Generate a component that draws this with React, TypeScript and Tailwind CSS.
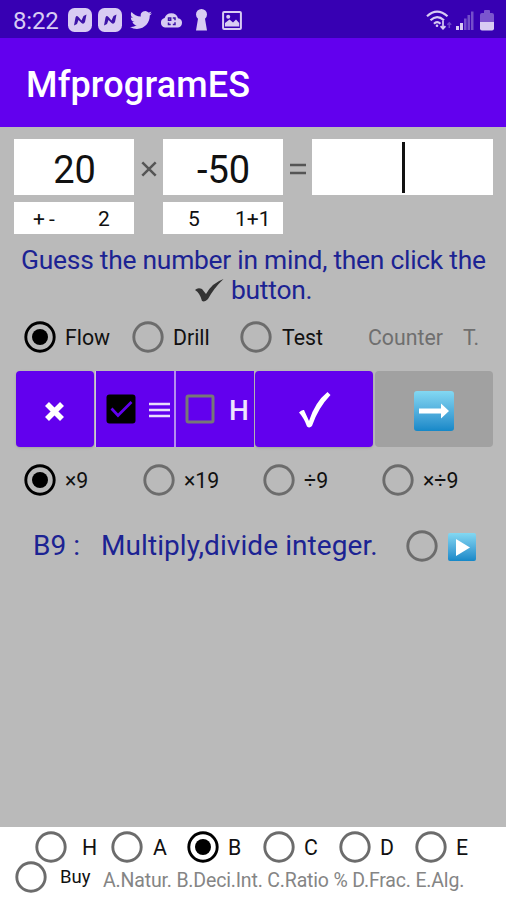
import type { ReactNode } from "react";

function Radio({ checked = false }: { checked?: boolean }) {
  return (
    <svg className={checked ? "size-8 shrink-0 text-black" : "size-8 shrink-0 text-[#6c6c6c]"} viewBox="0 0 32 32">
      <circle cx="16" cy="16" r="14.2" fill="none" stroke="currentColor" strokeWidth="2.9" />
      {checked && <circle cx="16" cy="16" r="8" fill="currentColor" />}
    </svg>
  );
}

function Option({ label, checked, className, gap }: { label: string; checked?: boolean; className: string; gap: string }) {
  return (
    <label className={`flex h-8 shrink-0 items-center whitespace-nowrap ${className}`}>
      <Radio checked={checked} />
      <span className={`pt-[2px] ${gap}`}>{label}</span>
    </label>
  );
}

function Box({ children, className }: { children?: ReactNode; className: string }) {
  return <div className={`flex shrink-0 items-center bg-white ${className}`}>{children}</div>;
}

function MessengerIcon() {
  return (
    <svg className="h-6 w-6 shrink-0" viewBox="0 0 24 24">
      <rect width="24" height="24" rx="6.5" fill="#d8ccf3" />
      <path d="M6 17.5 L7.5 9.5 Q8.5 7 10.5 9 L13.5 12.5 L15.5 8 L18.5 6.5 L17 14 Q15.5 17 13.5 15 L10.5 12 L9 16Z" fill="#3d14a8" />
    </svg>
  );
}

function StatusBar() {
  return (
    <div className="flex h-[38px] shrink-0 items-center bg-[#3700b3] pt-[2px] pl-[13px] text-[#d8ccf3]">
      <span className="w-[55px] pt-px text-[24px] tracking-[-0.2px]">8:22</span>
      <MessengerIcon />
      <span className="w-[6px]" />
      <MessengerIcon />
      <svg className="ml-[8px] h-[22px] w-[22px]" viewBox="0 0 24 24" fill="currentColor">
        <path d="M23.95 4.57a10 10 0 0 1-2.82.77 4.96 4.96 0 0 0 2.16-2.72c-.95.55-2 .95-3.13 1.18a4.92 4.92 0 0 0-8.38 4.48C7.69 8.09 4.07 6.13 1.64 3.16a4.82 4.82 0 0 0-.67 2.48c0 1.71.87 3.21 2.19 4.1a4.9 4.9 0 0 1-2.23-.62v.06a4.92 4.92 0 0 0 3.95 4.83 5 5 0 0 1-2.21.08 4.94 4.94 0 0 0 4.6 3.42A9.87 9.87 0 0 1 0 19.54a14 14 0 0 0 7.55 2.21c9.05 0 14-7.5 14-13.98 0-.21 0-.42-.02-.63a9.94 9.94 0 0 0 2.42-2.57z" />
      </svg>
      <svg className="ml-[8px] h-4 w-[23px]" viewBox="0 0 23 16">
        <path d="M5 15.5a4.8 4.8 0 0 1-.4-9.4A7 7 0 0 1 18 6.2a4.7 4.7 0 0 1 0 9.3Z" fill="currentColor" />
        <path d="M8.5 6h2.2v2.2H8.5zM12.8 6H15v2.2M8.5 10.5V12.5h2.2M15 10.3v2.2h-2.2" fill="none" stroke="#3d14a8" strokeWidth="1.5" />
      </svg>
      <svg className="ml-[12px] h-[22px] w-[13px]" viewBox="0 0 13 22" fill="currentColor">
        <path d="M6.5 0A5.5 5.5 0 0 0 1 5.5Q1 8 3 9.8L1 21.5H12L10 9.8Q12 8 12 5.5A5.5 5.5 0 0 0 6.5 0Z" />
      </svg>
      <svg className="ml-[14px] h-[19px] w-[20px]" viewBox="0 0 20 19">
        <rect x="1.1" y="1.1" width="17.8" height="16.8" rx="1" fill="none" stroke="currentColor" strokeWidth="2" />
        <path d="M3 15.5V12l4.5-3.5 3.5 3 3-3 3.2 3.5v3.5z" fill="currentColor" />
        <circle cx="6.2" cy="5.7" r="2" fill="currentColor" />
      </svg>
      <svg className="ml-[184px] h-[20px] w-[26px]" viewBox="0 0 26 20" fill="none" stroke="currentColor">
        <path d="M1 6.3Q11 -3 21.5 6.3M4.5 10.3Q11 4 18 10.3M8 13.7Q11 10.5 14.5 13.7" strokeWidth="2.2" />
        <circle cx="11" cy="15.7" r="1.3" fill="currentColor" stroke="none" />
        <path d="M17 10.5v8M14.6 16.2l2.4 2.6 2.4-2.6" strokeWidth="1.7" />
        <path d="M23.3 18v-5M21.4 14.8l1.9-2 1.9 2" strokeWidth="1.5" opacity=".35" />
      </svg>
      <svg className="ml-[4px] h-[19px] w-[18px]" viewBox="0 0 18 19" fill="currentColor">
        <path d="M0 15h3v4H0zM4 12h3v7H4z" />
        <path d="M8 7.5h2.6V19H8zM11.5 4h2.6v15h-2.6zM15 .5h2.5V19H15z" opacity=".38" />
      </svg>
      <svg className="ml-[6px] h-[21px] w-[14px]" viewBox="0 0 14 21" fill="currentColor">
        <path d="M0 12V5q0-2 2-2h2V1q0-1 1-1h4q1 0 1 1v2h2q2 0 2 2v7z" opacity=".42" />
        <path d="M0 12h14v6.5q0 2-2 2H2q-2 0-2-2z" />
      </svg>
    </div>
  );
}

function Problem() {
  return (
    <div className="flex pl-[14px]">
      <div className="w-[120px]">
        <Box className="h-14 justify-center pt-[6px] pl-px text-[38px]">20</Box>
        <Box className="mt-[7px] h-8 pt-[4px] pl-[19px] text-[21px]">
          <span className="w-[65px] tracking-[-0.5px]">+ -</span>
          <span>2</span>
        </Box>
      </div>
      <div className="flex h-14 w-[29px] items-center justify-center pt-1 text-[#555]">
        <svg className="size-4" viewBox="0 0 16 16" stroke="currentColor" strokeWidth="2.5">
          <path d="M1.3 1.3 14.7 14.7M14.7 1.3 1.3 14.7" />
        </svg>
      </div>
      <div className="w-[120px]">
        <Box className="h-14 justify-center pt-[6px] pl-px text-[38px]">-50</Box>
        <Box className="mt-[7px] h-8 pt-[4px] pl-[25px] text-[21px]">
          <span className="w-[47px]">5</span>
          <span>1+1</span>
        </Box>
      </div>
      <div className="flex h-14 w-[29px] items-center justify-center pt-1 text-[#555]">
        <svg className="h-3 w-4" viewBox="0 0 16 12" stroke="currentColor" strokeWidth="2.5">
          <path d="M0 2H16M0 10H16" />
        </svg>
      </div>
      <Box className="h-14 w-[181px] justify-center pl-[2px]">
        <span className="h-[51px] w-[3px] bg-[#111]" />
      </Box>
    </div>
  );
}

function Toolbar() {
  return (
    <div className="mt-[17px] flex h-[76px] pl-4">
      <button className="mr-px flex w-[78px] items-center justify-center rounded-[4px] bg-[#6200ee] pt-1 pr-[2px] shadow-sm">
        <svg className="size-[19px]" viewBox="0 0 19 19" stroke="#fff" strokeWidth="5.6">
          <path d="M2 2 17 17M17 2 2 17" />
        </svg>
      </button>
      <div className="flex w-[79px] items-center border-l border-[#d0c4e4] bg-[#6200ee] pl-[10px]">
        <svg className="size-[30px]" viewBox="0 0 30 30">
          <rect x=".5" y=".5" width="29" height="29" rx="3" fill="#000" />
          <path d="M5.5 14.5 12 21.5 25.5 8" fill="none" stroke="#6200ee" strokeWidth="2.7" />
        </svg>
        <svg className="mt-[2px] ml-[13px] h-4 w-[21px]" viewBox="0 0 21 16" stroke="#e9dcfc" strokeWidth="2.4">
          <path d="M0 2H21M0 8H21M0 14H21" />
        </svg>
      </div>
      <div className="flex w-20 items-center border-l-2 border-[#b48cf0] bg-[#6200ee] pl-[9px]">
        <svg className="size-[30px]" viewBox="0 0 30 30">
          <rect x="2" y="2" width="26" height="26" rx="1.5" fill="none" stroke="#777" strokeWidth="3" />
        </svg>
        <span className="ml-[14px] pt-[4px] text-[28px] font-medium text-[#eee4fd]">H</span>
      </div>
      <button className="mr-[2px] ml-px flex w-[118px] items-center justify-center rounded-[4px] bg-[#6200ee] pt-px pl-[2px] shadow-sm">
        <svg className="h-[36px] w-[32px]" viewBox="0 0 32 36">
          <path d="M0 20.5Q2.5 17.5 5 18L10 29Q16 10 28.5 0L31.5 3Q19 16 13 34Q10.5 36.5 8 34.5Q5 26 0 20.5Z" fill="#fff" />
        </svg>
      </button>
      <button className="flex w-[118px] items-center justify-center rounded-[4px] bg-[#a1a1a1] pt-1">
        <span className="flex size-10 items-center justify-center rounded-[3px] bg-linear-to-b from-[#83d8f2] to-[#1488c8]">
          <svg className="h-4 w-[30px]" viewBox="0 0 30 16" fill="#fff">
            <path d="M0 5.5H22V.5L30 8l-8 7.5v-5H0z" />
          </svg>
        </span>
      </button>
    </div>
  );
}

export default function App() {
  return (
    <div className="flex h-[900px] w-[506px] flex-col overflow-hidden bg-[#bababa] font-[Roboto,sans-serif] text-[#111]">
      <StatusBar />
      <header className="flex h-[89px] shrink-0 items-center bg-[#6200ee] pl-[26px] pt-[4px] text-[36px] font-medium tracking-[0.15px] text-white">
        MfprogramES
      </header>
      <main className="flex-1 pt-3">
        <Problem />
        <p className="mt-[11px] flex flex-col text-[26.4px] leading-[30px] tracking-[-0.25px] whitespace-nowrap text-[#1c2393]">
          <span className="pl-[21px]">Guess the number in mind, then click the</span>
          <span className="flex items-center pl-[195px]">
            <svg className="mr-[7px] h-[23px] w-[29px]" viewBox="0 0 29 23" fill="#333">
              <path d="M0 11Q3 8 7 10L11 15Q17 4 28.5 0Q19 9 13 20Q10 23.5 7 22Q5 14 0 11Z" />
            </svg>
            button.
          </span>
        </p>
        <div className="mt-[16px] flex pl-6 text-[21.3px]">
          <Option label="Flow" checked className="w-[108px]" gap="ml-[9px]" />
          <Option label="Drill" className="w-[108px]" gap="ml-[9px]" />
          <Option label="Test" className="w-[128px]" gap="ml-[10px]" />
          <span className="w-[95px] pt-px leading-8 text-[#6f6f6f]">Counter</span>
          <span className="pt-px leading-8 text-[#6f6f6f]">T.</span>
        </div>
        <Toolbar />
        <div className="mt-[17px] flex pl-6 text-[21.3px]">
          <Option label="×9" checked className="w-[119px]" gap="ml-[9px]" />
          <Option label="×19" className="w-[120px]" gap="ml-[9px]" />
          <Option label="÷9" className="w-[119px]" gap="ml-[9px]" />
          <Option label="×÷9" className="w-[119px]" gap="ml-[9px]" />
        </div>
        <div className="mt-[34px] flex h-8 items-center pl-[33px] text-[28px] text-[#1c2393]">
          <span className="w-[68px] whitespace-nowrap">B9 :</span>
          <span className="w-[305px] tracking-[0.07px] whitespace-nowrap">Multiply,divide integer.</span>
          <Radio />
          <span className="mt-[2px] ml-[10px] flex size-7 items-center justify-center rounded-[2px] bg-linear-to-b from-[#83d8f2] to-[#1488c8]">
            <svg className="ml-px h-[17px] w-[14px]" viewBox="0 0 14 17" fill="#fff">
              <path d="M0 0 14 8.5 0 17z" />
            </svg>
          </span>
        </div>
      </main>
      <footer className="h-[73px] shrink-0 bg-white pt-1">
        <div className="flex pl-[35px] text-[21.3px]">
          <Option label="H" className="w-[76px]" gap="ml-[15px]" />
          <Option label="A" className="w-[76px]" gap="ml-[10px]" />
          <Option label="B" checked className="w-[76px]" gap="ml-[9px]" />
          <Option label="C" className="w-[76px]" gap="ml-[9px]" />
          <Option label="D" className="w-[76px]" gap="ml-[9px]" />
          <Option label="E" className="w-[76px]" gap="ml-[9px]" />
        </div>
        <div className="-mt-[2px] flex h-8 items-center pl-[15px] text-[18.5px]">
          <Option label="Buy" className="w-[88px]" gap="ml-[13px]" />
          <span className="pt-[8px] text-[19.5px] tracking-[-0.17px] whitespace-nowrap text-[#858585]">
            A.Natur. B.Deci.Int. C.Ratio % D.Frac. E.Alg.
          </span>
        </div>
      </footer>
    </div>
  );
}
